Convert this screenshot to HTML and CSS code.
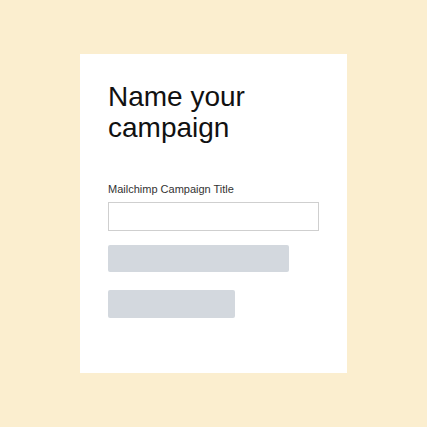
FILE: index.html
```html
<!DOCTYPE html>
<html>
<head>
<meta charset="utf-8">
<link rel="stylesheet" href="styles.css">
</head>
<body>
<div class="card">
  <h1 class="title">Name your<br>campaign</h1>
  <label class="label">Mailchimp Campaign Title</label>
  <div class="input"></div>
  <div class="bar bar-long"></div>
  <div class="bar bar-short"></div>
</div>
</body>
</html>
```
FILE: styles.css
```css
html, body {
  margin: 0;
  padding: 0;
  background: #fbeecf;
  width: 427px;
  height: 427px;
  overflow: hidden;
  font-family: "Liberation Sans", Arial, sans-serif;
}
.card {
  margin: 54px 0 0 80px;
  width: 267px;
  height: 319px;
  background: #ffffff;
  box-sizing: border-box;
  padding: 27px 28px 0 28px;
  display: flex;
  flex-direction: column;
}
.title {
  margin: 0;
  font-size: 28px;
  line-height: 31px;
  font-weight: 400;
  color: #111;
}
.label {
  margin-top: 40px;
  font-size: 11px;
  line-height: 13px;
  color: #333;
}
.input {
  margin-top: 6px;
  width: 211px;
  height: 29px;
  box-sizing: border-box;
  border: 1px solid #cfcfcf;
  background: #fff;
}
.bar {
  background: #d3d8de;
  border-radius: 2px;
  height: 27px;
}
.bar-long {
  margin-top: 14px;
  width: 181px;
}
.bar-short {
  margin-top: 18px;
  width: 127px;
  height: 28px;
}
```
